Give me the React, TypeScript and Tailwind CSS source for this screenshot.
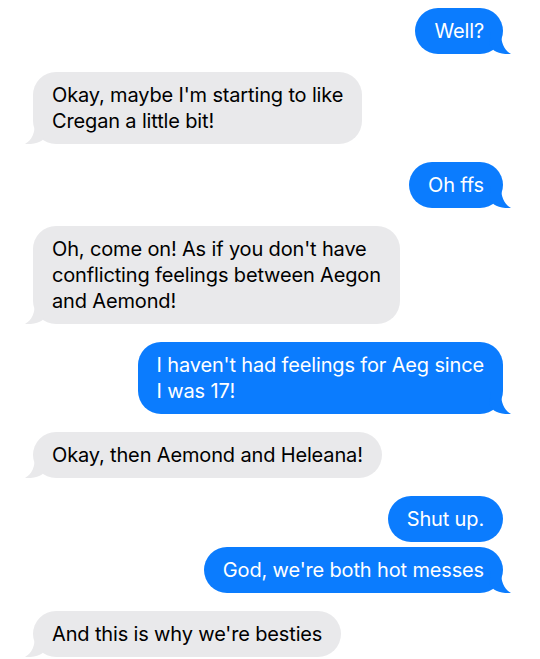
import React from "react";

type Msg = { from: "me" | "them"; lines: string[]; tail?: boolean; gap?: number };

const messages: Msg[] = [
  { from: "me", lines: ["Well?"], tail: true },
  { from: "them", lines: ["Okay, maybe I'm starting to like", "Cregan a little bit!"], tail: true },
  { from: "me", lines: ["Oh ffs"], tail: true },
  { from: "them", lines: ["Oh, come on! As if you don't have", "conflicting feelings between Aegon", "and Aemond!"], tail: true },
  { from: "me", lines: ["I haven't had feelings for Aeg since", "I was 17!"], tail: true },
  { from: "them", lines: ["Okay, then Aemond and Heleana!"], tail: true },
  { from: "me", lines: ["Shut up."], tail: false },
  { from: "me", lines: ["God, we're both hot messes"], tail: true, gap: 5 },
  { from: "them", lines: ["And this is why we're besties"], tail: true },
];

function Tail({ color, left }: { color: string; left?: boolean }) {
  return (
    <svg
      width="24"
      height="22"
      viewBox="0 0 24 22"
      className={left ? "absolute bottom-0 -left-[10px] -scale-x-100" : "absolute bottom-0 -right-[10px]"}
    >
      <path d="M2 0 L12 0 C12 11 15 18 22 22 C15 22.6 9 21 5 18.5 L0 13 Z" fill={color} />
    </svg>
  );
}

function Bubble({ m }: { m: Msg }) {
  const me = m.from === "me";
  const color = me ? "#0b7cfe" : "#e9e9eb";
  return (
    <div className={me ? "flex justify-end" : "flex justify-start"} style={{ marginTop: m.gap ?? 18 }}>
      <div
        className={
          me
            ? "relative rounded-[23px] bg-[#0b7cfe] px-[19px] py-[10px] text-white"
            : "relative rounded-[23px] bg-[#e9e9eb] px-[19px] py-[10px] text-black"
        }
      >
        {m.lines.map((l, i) => (
          <div key={i} className="relative z-10 whitespace-nowrap">{l}</div>
        ))}
        {m.tail && <Tail color={color} left={!me} />}
      </div>
    </div>
  );
}

export default function App() {
  return (
    <div className="w-[540px] h-[659px] overflow-hidden bg-white pt-[8px] pl-[33px] pr-[37px] font-['Inter',sans-serif] text-[20px] leading-[26px] tracking-[-0.15px]">
      <div className="flex flex-col [&>*:first-child]:!mt-0">
        {messages.map((m, i) => (
          <Bubble key={i} m={m} />
        ))}
      </div>
    </div>
  );
}
